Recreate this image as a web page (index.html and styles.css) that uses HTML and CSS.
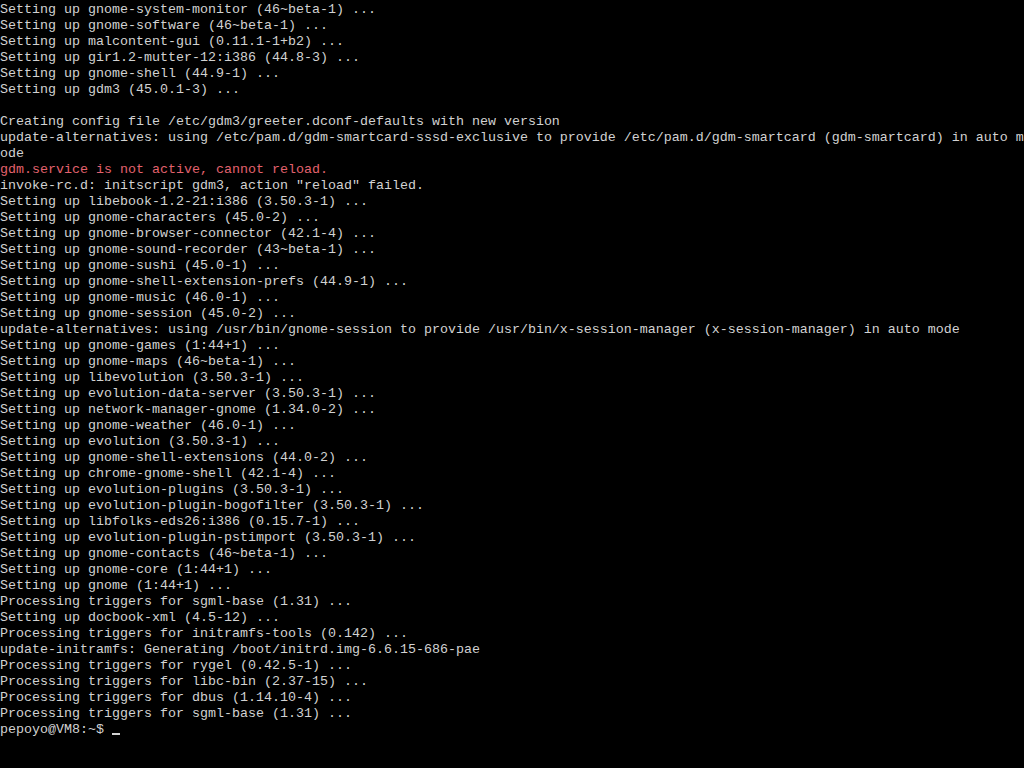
FILE: index.html
```html
<!DOCTYPE html>
<html lang="en">
<head>
<meta charset="utf-8">
<title>Console</title>
<link rel="stylesheet" href="styles.css">
</head>
<body>
<main class="console">
<div class="line">Setting up gnome-system-monitor (46~beta-1) ...</div>
<div class="line">Setting up gnome-software (46~beta-1) ...</div>
<div class="line">Setting up malcontent-gui (0.11.1-1+b2) ...</div>
<div class="line">Setting up gir1.2-mutter-12:i386 (44.8-3) ...</div>
<div class="line">Setting up gnome-shell (44.9-1) ...</div>
<div class="line">Setting up gdm3 (45.0.1-3) ...</div>
<div class="line"></div>
<div class="line">Creating config file /etc/gdm3/greeter.dconf-defaults with new version</div>
<div class="line">update-alternatives: using /etc/pam.d/gdm-smartcard-sssd-exclusive to provide /etc/pam.d/gdm-smartcard (gdm-smartcard) in auto m</div>
<div class="line">ode</div>
<div class="line error">gdm.service is not active, cannot reload.</div>
<div class="line">invoke-rc.d: initscript gdm3, action "reload" failed.</div>
<div class="line">Setting up libebook-1.2-21:i386 (3.50.3-1) ...</div>
<div class="line">Setting up gnome-characters (45.0-2) ...</div>
<div class="line">Setting up gnome-browser-connector (42.1-4) ...</div>
<div class="line">Setting up gnome-sound-recorder (43~beta-1) ...</div>
<div class="line">Setting up gnome-sushi (45.0-1) ...</div>
<div class="line">Setting up gnome-shell-extension-prefs (44.9-1) ...</div>
<div class="line">Setting up gnome-music (46.0-1) ...</div>
<div class="line">Setting up gnome-session (45.0-2) ...</div>
<div class="line">update-alternatives: using /usr/bin/gnome-session to provide /usr/bin/x-session-manager (x-session-manager) in auto mode</div>
<div class="line">Setting up gnome-games (1:44+1) ...</div>
<div class="line">Setting up gnome-maps (46~beta-1) ...</div>
<div class="line">Setting up libevolution (3.50.3-1) ...</div>
<div class="line">Setting up evolution-data-server (3.50.3-1) ...</div>
<div class="line">Setting up network-manager-gnome (1.34.0-2) ...</div>
<div class="line">Setting up gnome-weather (46.0-1) ...</div>
<div class="line">Setting up evolution (3.50.3-1) ...</div>
<div class="line">Setting up gnome-shell-extensions (44.0-2) ...</div>
<div class="line">Setting up chrome-gnome-shell (42.1-4) ...</div>
<div class="line">Setting up evolution-plugins (3.50.3-1) ...</div>
<div class="line">Setting up evolution-plugin-bogofilter (3.50.3-1) ...</div>
<div class="line">Setting up libfolks-eds26:i386 (0.15.7-1) ...</div>
<div class="line">Setting up evolution-plugin-pstimport (3.50.3-1) ...</div>
<div class="line">Setting up gnome-contacts (46~beta-1) ...</div>
<div class="line">Setting up gnome-core (1:44+1) ...</div>
<div class="line">Setting up gnome (1:44+1) ...</div>
<div class="line">Processing triggers for sgml-base (1.31) ...</div>
<div class="line">Setting up docbook-xml (4.5-12) ...</div>
<div class="line">Processing triggers for initramfs-tools (0.142) ...</div>
<div class="line">update-initramfs: Generating /boot/initrd.img-6.6.15-686-pae</div>
<div class="line">Processing triggers for rygel (0.42.5-1) ...</div>
<div class="line">Processing triggers for libc-bin (2.37-15) ...</div>
<div class="line">Processing triggers for dbus (1.14.10-4) ...</div>
<div class="line">Processing triggers for sgml-base (1.31) ...</div>
<div class="line">pepoyo@VM8:~$ <span class="cursor"></span></div>
</main>
</body>
</html>
```

FILE: styles.css
```css
html, body {
  margin: 0;
  padding: 0;
  background: #000;
}
body {
  width: 1024px;
  height: 768px;
  overflow: hidden;
}
.console {
  padding-top: 2px;
  font-family: "Liberation Mono", "DejaVu Sans Mono", monospace;
  font-size: 13.333px;
  line-height: 16px;
  color: #d2d2d2;
}
.line {
  height: 16px;
  white-space: pre;
}
.error {
  color: #e2626e;
}
.cursor {
  display: inline-block;
  width: 8px;
  height: 2px;
  background: #d2d2d2;
  vertical-align: -2px;
}
```
